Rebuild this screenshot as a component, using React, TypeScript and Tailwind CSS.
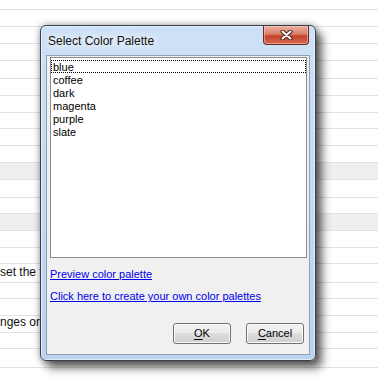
import React from 'react';

// background sheet behind the modal: plain ruled rows
const rows = [
    { cls: 'h-[10px]' },
    { cls: 'h-[17px]' },
    { cls: 'h-[17px]' },
    { cls: 'h-[17px]' },
    { cls: 'h-[18px]' },
    { cls: 'h-[17px]' },
    { cls: 'h-[17px]' },
    { cls: 'h-[16px]' },
    { cls: 'h-[17px]' },
    { cls: 'h-[17px]' },
    { cls: 'h-[17px] bg-[#efefef]' },
    { cls: 'h-[18px]' },
    { cls: 'h-[16px]' },
    { cls: 'h-[17px] bg-[#efefef]' },
    { cls: 'h-[17px]' },
    { cls: 'h-[16px]' },
    { cls: 'h-[19px]', text: 'set the fo' },
    { cls: 'h-[16px]' },
    { cls: 'h-[17px]' },
    { cls: 'h-[17px]', text: 'nges or' },
    { cls: 'h-[16px]' },
    { cls: 'h-[19px]' },
    { cls: 'h-[14px]' },
];

const palettes = ['blue', 'coffee', 'dark', 'magenta', 'purple', 'slate'];

function CloseGlyph() {
    return (
        <svg width="13" height="10" viewBox="0 0 13 10">
            <path d="M2.5 1.5 L10.5 8.5 M10.5 1.5 L2.5 8.5" stroke="#4a2018" strokeWidth="4" strokeLinecap="round" />
            <path d="M2.5 1.5 L10.5 8.5 M10.5 1.5 L2.5 8.5" stroke="#ffffff" strokeWidth="2" strokeLinecap="round" />
        </svg>
    );
}

function WinButton({ mnemonic, rest }: { mnemonic: string; rest: string }) {
    return (
        <button className="flex h-[21px] w-[58px] items-center justify-center rounded-[3px] border border-[#707070] bg-[linear-gradient(#f2f2f2_0%,#ebebeb_50%,#dddddd_50%,#cfcfcf_100%)] text-[11px] leading-[13px] text-black shadow-[inset_0_0_0_1px_#fbfbfb]">
            <span className="underline underline-offset-[2px]">{mnemonic}</span>
            {rest}
        </button>
    );
}

function PaletteDialog() {
    return (
        <div className="absolute left-[40px] top-[25px] flex h-[336px] w-[276px] flex-col rounded-[6px] border border-[#36404b] bg-[linear-gradient(to_bottom,#cde1f6,#bad3ee)] shadow-[inset_0_0_0_1px_rgba(255,255,255,0.55),0_0_7px_rgba(0,0,0,0.4),6px_7px_10px_rgba(0,0,0,0.6)]">
            <div className="flex h-[29px] shrink-0 items-start justify-between pl-[7px] pr-[6px]">
                <span className="pt-[8px] text-[12px] leading-[14px] text-[#101010] [text-shadow:0_0_8px_#fff,0_0_8px_#fff,0_0_14px_#fff]">
                    Select Color Palette
                </span>
                <button className="flex h-[19px] w-[46px] items-center justify-center rounded-b-[4px] border border-t-0 border-[#6b2b20] bg-[linear-gradient(#eab0a0_0%,#d98068_45%,#c4432d_55%,#d46a50_100%)] shadow-[inset_0_0_0_1px_rgba(255,210,200,0.5)]">
                    <CloseGlyph />
                </button>
            </div>

            <div className="mx-[5px] mb-[5px] flex flex-1 flex-col border border-[#8d9fb4] bg-[#f0f0f0] pl-[3px] pr-[2px] pt-[1px]">
                <div className="h-[201px] shrink-0 border border-[#8a8d93] bg-white pt-[2px]">
                    {palettes.map((p, i) => (
                        <div
                            key={p}
                            className={
                                i === 0
                                    ? 'h-[13px] pl-[2px] pt-[1px] text-[11px] leading-[12px] text-black outline-1 outline-dotted outline-black -outline-offset-1'
                                    : 'h-[13px] pl-[2px] pt-[1px] text-[11px] leading-[12px] text-black'
                            }
                        >
                            {p}
                        </div>
                    ))}
                </div>

                <a className="mt-[10px] self-start text-[11px] leading-[13px] text-[#0000ee] underline" href="#">
                    Preview color palette
                </a>
                <a className="mt-[9px] self-start text-[11px] leading-[13px] text-[#0000ee] underline" href="#">
                    Click here to create your own color palettes
                </a>

                <div className="mr-[3px] mt-[20px] flex justify-end gap-[15px]">
                    <WinButton mnemonic="O" rest="K" />
                    <WinButton mnemonic="C" rest="ancel" />
                </div>
            </div>
        </div>
    );
}

export default function App() {
    return (
        <div className="relative h-[381px] w-[378px] overflow-hidden bg-white font-['Liberation_Sans',Arial,sans-serif] text-[11px] text-black">
            <div className="flex flex-col">
                {rows.map((r, i) => (
                    <div key={i} className={`${r.cls} flex items-end whitespace-nowrap border-b border-[#e2e2e2] pb-[3px] text-[12px] leading-[14px] text-[#111]`}>
                        {r.text}
                    </div>
                ))}
            </div>
            <PaletteDialog />
        </div>
    );
}
